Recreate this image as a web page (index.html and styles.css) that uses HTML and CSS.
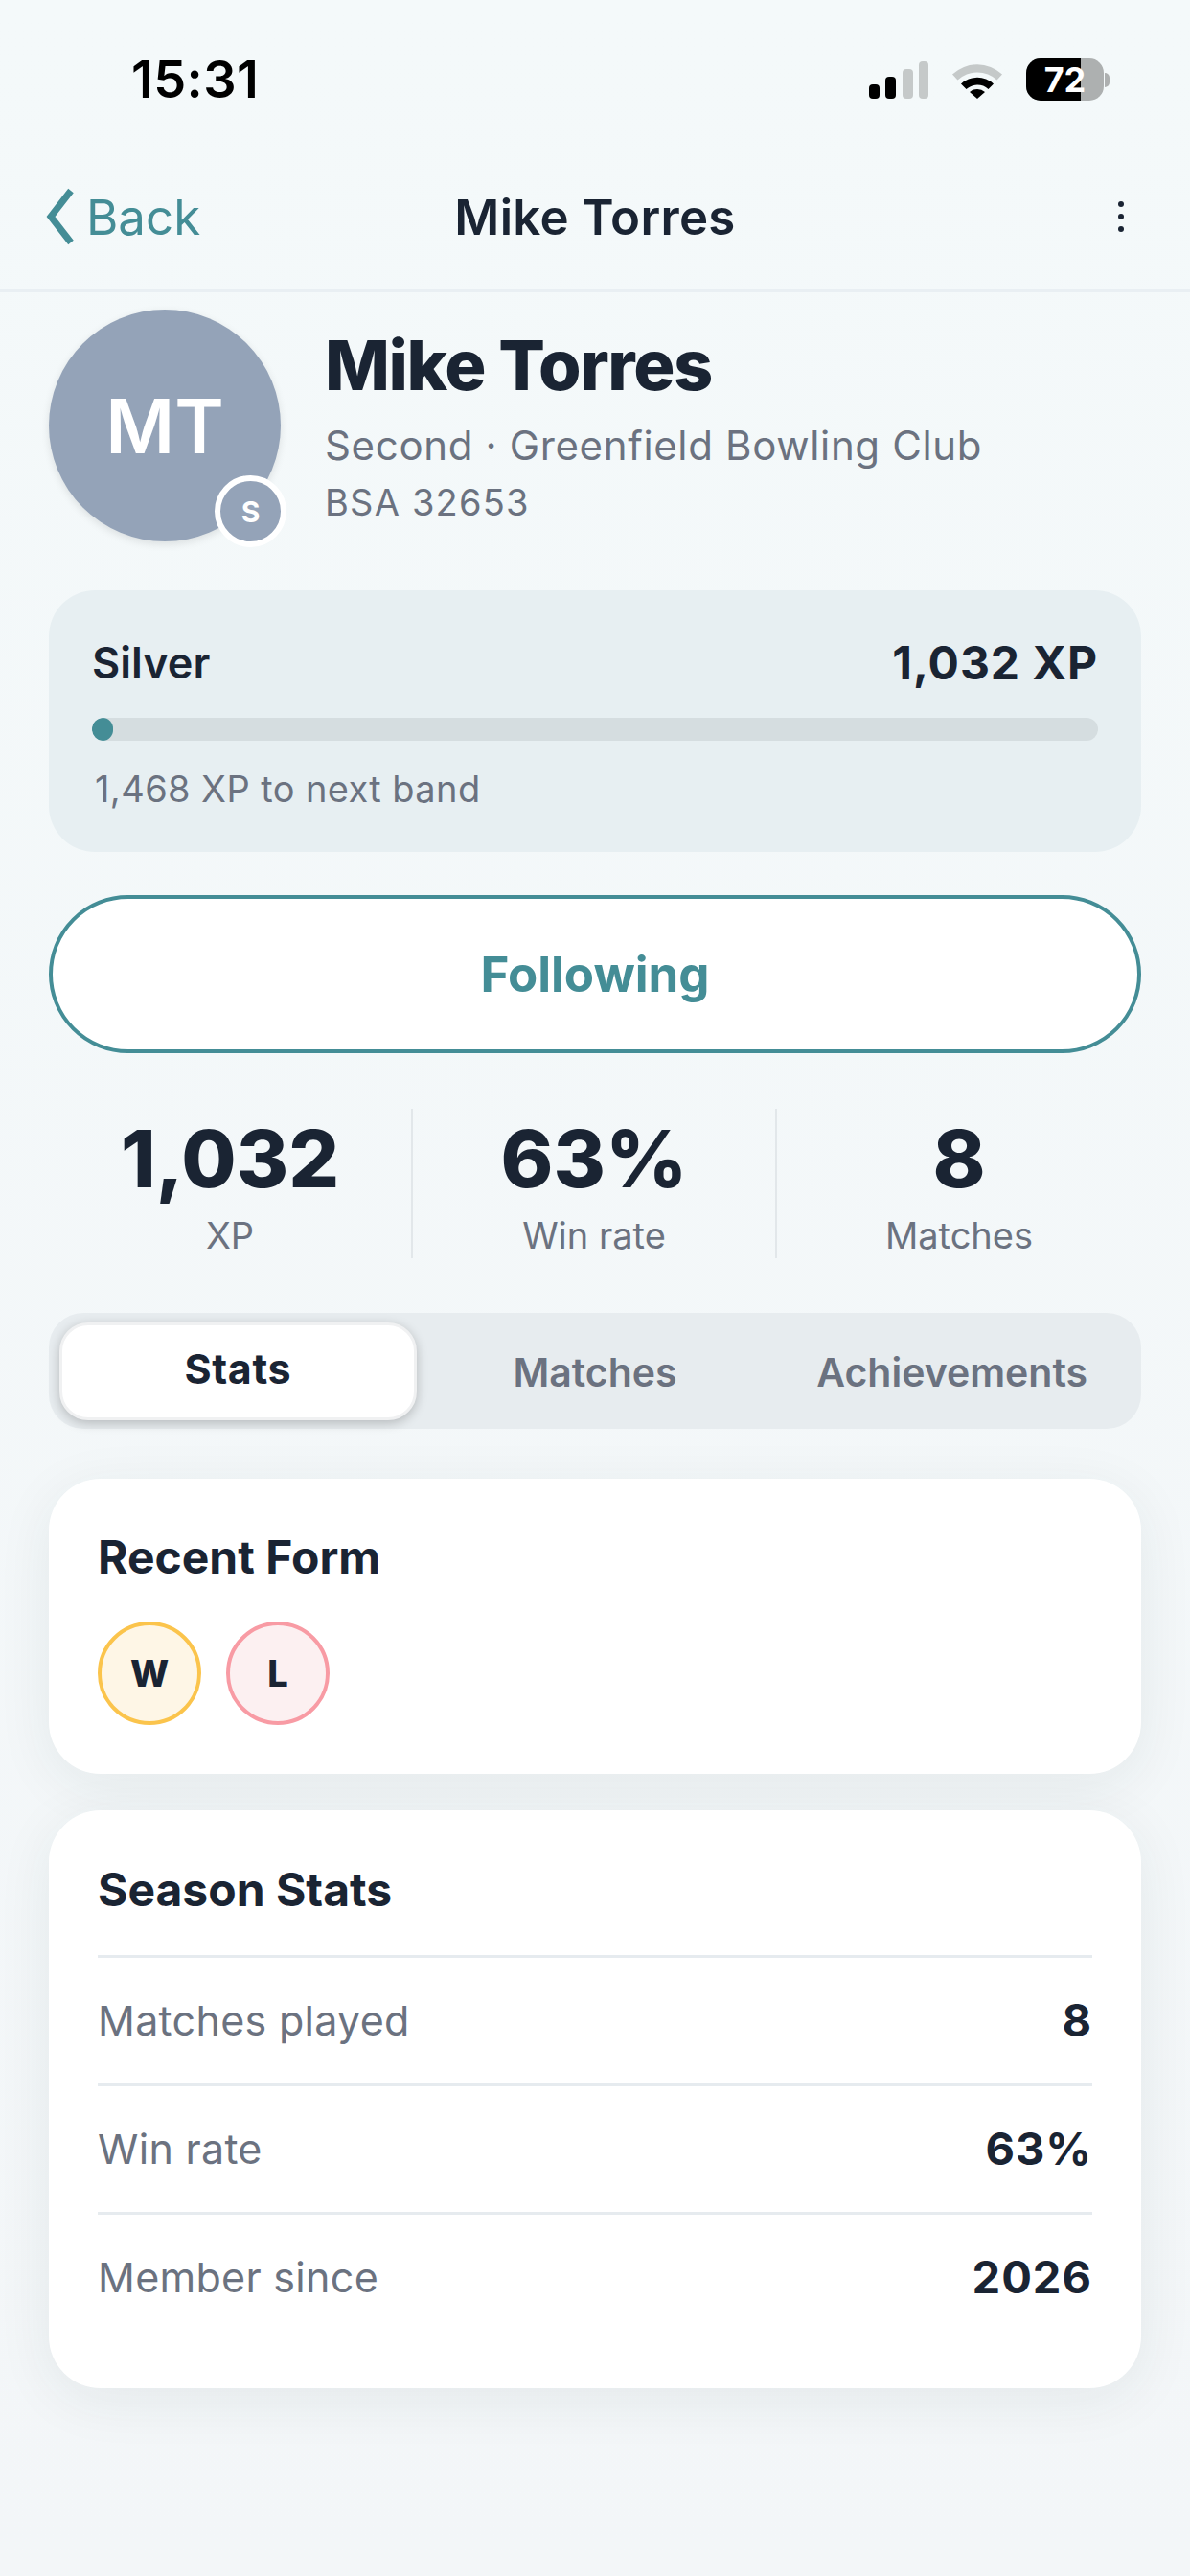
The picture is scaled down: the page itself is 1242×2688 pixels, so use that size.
FILE: index.html
```html
<!DOCTYPE html>
<html lang="en">
<head>
<meta charset="UTF-8">
<title>Mike Torres</title>
<link rel="stylesheet" href="styles.css">
</head>
<body>
<div class="screen">
    <div class="status">
        <span class="time">15:31</span>
        <div class="status-icons">
            <svg class="signal" width="62" height="39" viewBox="0 0 62 39">
                <rect x="0" y="24" width="11" height="15" rx="4" fill="#000"/>
                <rect x="17" y="16" width="11" height="23" rx="4" fill="#000"/>
                <rect x="35" y="8" width="11" height="31" rx="4" fill="#c5c9c9"/>
                <rect x="52" y="0" width="10" height="39" rx="4" fill="#c5c9c9"/>
            </svg>
            <svg class="wifi" width="54" height="39" viewBox="0 0 54 39">
                <path d="M1 13.5 A38 38 0 0 1 53 13.5 L47.5 19.5 A30 30 0 0 0 6.500 19.5 Z" fill="#c5c9c9"/>
                <path d="M10 23.500 A25 25 0 0 1 44 23.500 L38.500 29 A17 17 0 0 0 15.500 29 Z" fill="#000"/>
                <path d="M19 32 A12 12 0 0 1 35 32 L27 39 Z" fill="#000"/>
            </svg>
            <div class="battery">
                <div class="battery-body">
                    <div class="battery-fill"></div>
                    <span class="battery-num">72</span>
                </div>
                <div class="battery-nub"></div>
            </div>
        </div>
    </div>

    <div class="nav">
        <div class="back">
            <svg width="30" height="60" viewBox="0 0 30 60"><path d="M26 3 L5 30 L26 57" fill="none" stroke="#448d96" stroke-width="7"/></svg>
            <span>Back</span>
        </div>
        <div class="nav-title">Mike Torres</div>
        <div class="more"><i></i><i></i><i></i></div>
    </div>

    <div class="content">
        <div class="profile">
            <div class="avatar">
                MT
                <div class="avatar-badge">S</div>
            </div>
            <div class="profile-info">
                <div class="profile-name">Mike Torres</div>
                <div class="profile-sub">Second · Greenfield Bowling Club</div>
                <div class="profile-id">BSA 32653</div>
            </div>
        </div>

        <div class="xp-card">
            <div class="xp-top">
                <span class="xp-band">Silver</span>
                <span class="xp-total">1,032 XP</span>
            </div>
            <div class="xp-bar"><div class="xp-fill"></div></div>
            <div class="xp-next">1,468 XP to next band</div>
        </div>

        <div class="follow-btn">Following</div>

        <div class="stats">
            <div class="stat">
                <div class="stat-num">1,032</div>
                <div class="stat-label">XP</div>
            </div>
            <div class="stat">
                <div class="stat-num">63%</div>
                <div class="stat-label">Win rate</div>
            </div>
            <div class="stat">
                <div class="stat-num">8</div>
                <div class="stat-label">Matches</div>
            </div>
        </div>

        <div class="tabs">
            <div class="tab active">Stats</div>
            <div class="tab">Matches</div>
            <div class="tab">Achievements</div>
        </div>

        <div class="card form-card">
            <div class="card-title">Recent Form</div>
            <div class="form-row">
                <div class="pill win">W</div>
                <div class="pill loss">L</div>
            </div>
        </div>

        <div class="card season-card">
            <div class="card-title">Season Stats</div>
            <div class="row"><span>Matches played</span><b>8</b></div>
            <div class="row"><span>Win rate</span><b>63%</b></div>
            <div class="row"><span>Member since</span><b>2026</b></div>
        </div>
    </div>
</div>
</body>
</html>
```

FILE: styles.css
```css
* {box-sizing: border-box;}
html, body {margin: 0; padding: 0;}
body {font-family: Inter, "Noto Sans", sans-serif; color: #1a2433;}
.screen {width: 1242px; height: 2688px; overflow: hidden; background: linear-gradient(#f4f9fa, #f3f6f8);}

/* status bar */
.status {height: 150px; padding: 56px 84px 0 137px; display: flex; justify-content: space-between; align-items: flex-start;}
.time {font-size: 54px; line-height: 54px; font-weight: 600; color: #000; letter-spacing: 0.4px;}
.status-icons {display: flex; align-items: flex-start; margin-top: 5px;}
.signal {margin-right: 24px; margin-top: 3px;}
.wifi {margin-right: 24px; margin-top: 3px;}
.battery {display: flex; align-items: center;}
.battery-body {width: 81px; height: 44px; border-radius: 15px; background: #adb0b0; overflow: hidden; display: flex; align-items: center; justify-content: center; position: relative;}
.battery-fill {position: absolute; left: 0; top: 0; bottom: 0; width: 57px; background: #000;}
.battery-num {position: relative; color: #fff; font-size: 36px; font-weight: 700;}
.battery-nub {width: 5px; height: 15px; background: #adb0b0; border-radius: 0 8px 8px 0; margin-left: 1px;}

/* nav */
.nav {height: 155px; padding: 0 51px 0 48px; border-bottom: 3px solid #e9eff3; display: flex; align-items: center; justify-content: space-between; position: relative;}
.back {display: flex; align-items: center; color: #448d96; font-size: 51px; gap: 12px;}
.nav-title {position: absolute; left: 0; right: 0; text-align: center; font-size: 51px; font-weight: 600; letter-spacing: 0.3px;}
.more {display: flex; flex-direction: column; gap: 7px; margin-right: 18px;}
.more i {display: block; width: 6px; height: 6px; border-radius: 50%; background: #1a2433;}

/* content */
.content {padding: 18px 51px 0; display: flex; flex-direction: column;}

.profile {display: flex; align-items: flex-start; gap: 46px; height: 293px;}
.avatar {position: relative; width: 242px; height: 242px; flex: none; border-radius: 50%; background: #94a3b8; color: #fff; font-size: 78px; font-weight: 600; display: flex; align-items: center; justify-content: center; box-shadow: 0 3px 9px rgba(0, 0, 0, 0.1);}
.avatar-badge {position: absolute; right: -6px; bottom: -6px; width: 75px; height: 75px; border-radius: 50%; background: #94a3b8; border: 6px solid #fff; font-size: 30px; font-weight: 700; display: flex; align-items: center; justify-content: center;}
.profile-info {padding-top: 19px;}
.profile-name {font-size: 72px; line-height: 78px; font-weight: 800; letter-spacing: -1.4px;}
.profile-sub {font-size: 42px; line-height: 51px; color: #6b7280; margin-top: 19px; letter-spacing: 0.65px;}
.profile-id {font-size: 38px; line-height: 45px; color: #6b7280; margin-top: 12px; letter-spacing: 1.2px;}

.xp-card {height: 273px; border-radius: 48px; background: #e7eff2; padding: 51px 45px 0;}
.xp-top {display: flex; justify-content: space-between; align-items: center; height: 48px;}
.xp-band {font-size: 45px; font-weight: 600;}
.xp-total {font-size: 48px; font-weight: 700; letter-spacing: 1px;}
.xp-bar {height: 24px; border-radius: 12px; background: #d5dde0; margin-top: 34px; overflow: hidden;}
.xp-fill {width: 22px; height: 24px; border-radius: 12px; background: #448d96;}
.xp-next {font-size: 38px; line-height: 44px; color: #6b7280; margin-top: 28px; margin-left: 3px; letter-spacing: 0.4px;}

.follow-btn {height: 165px; margin-top: 45px; border: 4px solid #448d96; border-radius: 83px; background: #fff; color: #448d96; font-size: 51px; font-weight: 700; display: flex; align-items: center; justify-content: center;}

.stats {display: grid; grid-template-columns: repeat(3, 1fr); margin-top: 58px; height: 156px;}
.stat {text-align: center; border-right: 2px solid #e2e7ea;}
.stat:last-child {border-right: none;}
.stat-num {font-size: 83px; line-height: 104px; font-weight: 800;}
.stat-label {font-size: 38px; line-height: 44px; color: #6b7280; margin-top: 6px;}

.tabs {height: 121px; margin-top: 57px; padding: 10px 11px 9px; border-radius: 36px; background: #e7ecef; display: grid; grid-template-columns: repeat(3, 1fr);}
.tab {display: flex; align-items: center; justify-content: center; padding-top: 2px; font-size: 41px; font-weight: 600; color: #6b7280;}
.tab.active {background: #fff; color: #1a2433; font-size: 43px; font-weight: 700; letter-spacing: 0.6px; border-radius: 30px; border: 3px solid #f0f1f2; padding: 0 0 6px; box-shadow: 0 3px 12px rgba(0, 0, 0, 0.22);}

.card {background: #fff; border-radius: 54px; box-shadow: 0 12px 60px rgba(30, 50, 60, 0.07); padding: 52px 51px 0;}
.card-title {font-size: 48px; line-height: 60px; font-weight: 700;}

.form-card {height: 308px; margin-top: 52px;}
.form-row {display: flex; gap: 26px; margin-top: 37px;}
.pill {width: 108px; height: 108px; border-radius: 50%; display: flex; align-items: center; justify-content: center; font-size: 38px; font-weight: 800; border: 4px solid;}
.pill.win {background: #fef6e6; border-color: #fbc44c;}
.pill.loss {background: #fcf0f1; border-color: #f89ba4;}

.season-card {height: 603px; margin-top: 38px; padding-top: 53px;}
.season-card .card-title {height: 98px;}
.row {height: 134px; border-top: 3px solid #e6ebef; display: flex; align-items: center; justify-content: space-between; font-size: 43px; letter-spacing: 0.3px; color: #6b7280; padding-bottom: 2px;}
.row b {font-size: 47px; font-weight: 700; color: #1a2433; letter-spacing: 1px;}
```
